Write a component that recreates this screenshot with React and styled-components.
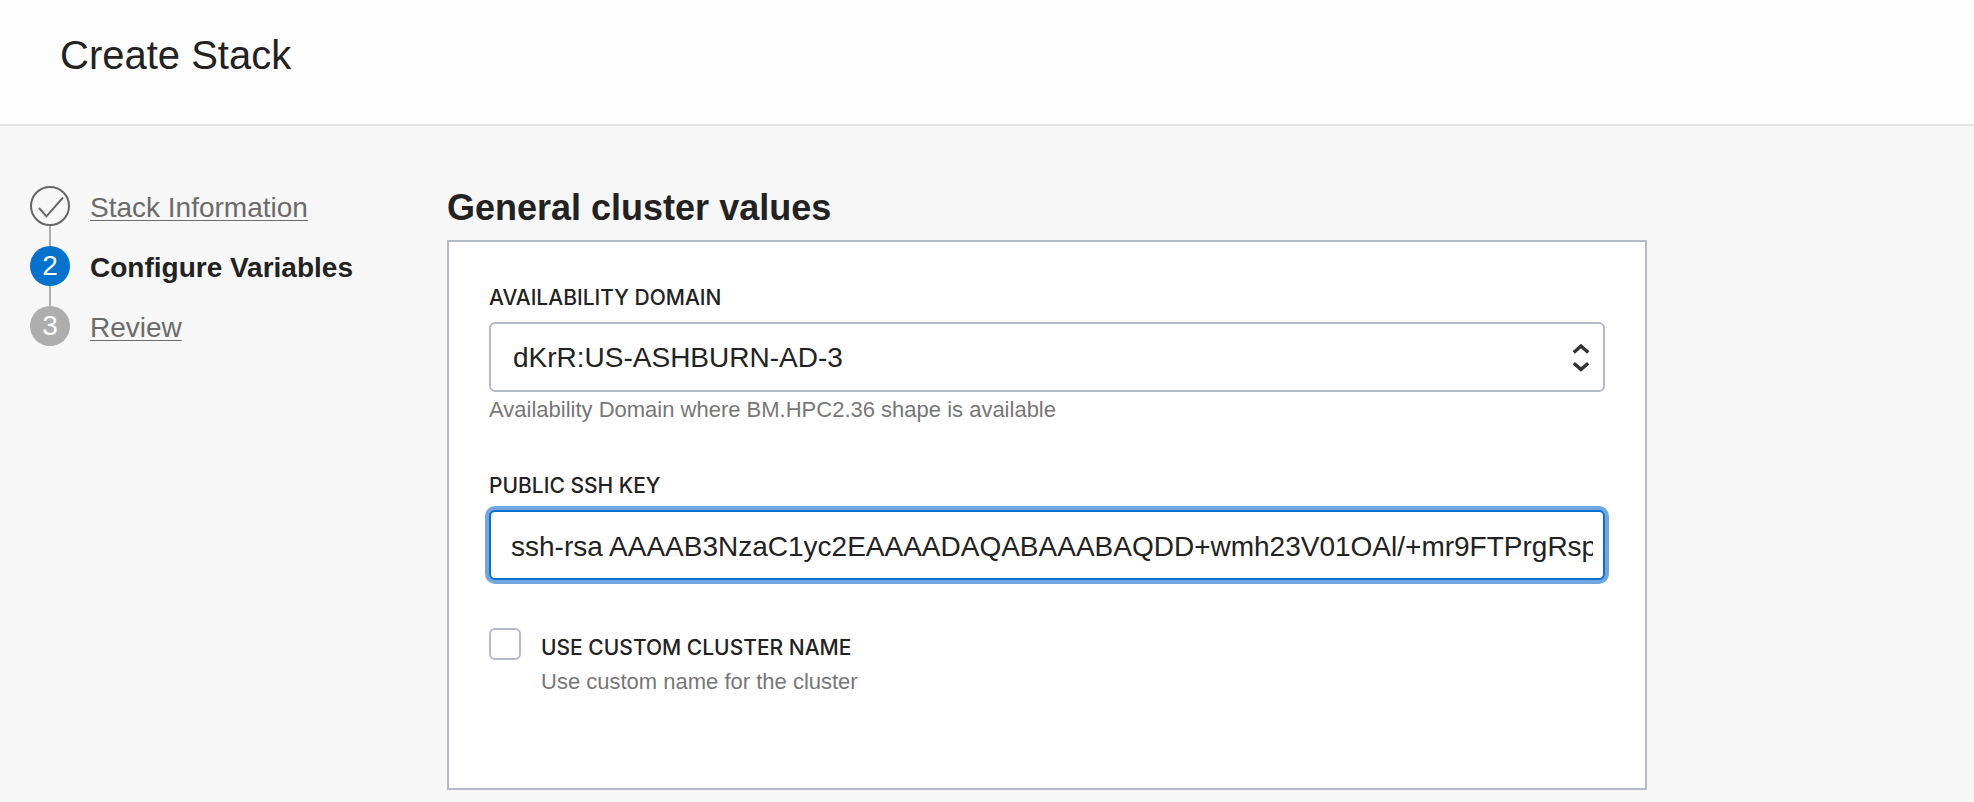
import React, { useEffect, useRef, useState } from "react";
import styled, { createGlobalStyle, css } from "styled-components";

const GlobalStyle = createGlobalStyle`
  *, *::before, *::after {
    box-sizing: border-box;
  }

  body {
    margin: 0;
    background: #f7f7f7;
    color: #222222;
    font-family: "Liberation Sans", Arial, sans-serif;
    font-size: 28px;
    line-height: 32px;
  }
`;

const Header = styled.header`
  padding: 31px 60px 45px;
  background: #fdfdfd;
  border-bottom: 2px solid #e4e4e4;
`;

const PageTitle = styled.h1`
  margin: 0;
  font-size: 40px;
  font-weight: 400;
  line-height: 48px;
`;

const Layout = styled.div`
  display: flex;
  align-items: flex-start;
  gap: 40px;
  padding: 60px 30px 12px;
`;

const StepList = styled.ol`
  display: flex;
  flex-direction: column;
  flex: 0 0 377px;
  margin: 0;
  padding: 0;
  list-style: none;
`;

const Step = styled.li`
  display: flex;
  align-items: flex-start;
  gap: 20px;
`;

const StepMarker = styled.div`
  display: flex;
  flex-direction: column;
  align-items: center;
`;

const StepBadge = styled.span`
  display: grid;
  place-items: center;
  width: 40px;
  height: 40px;
  border-radius: 50%;
  color: #ffffff;
  line-height: 40px;

  ${({ $state }) =>
    $state === "done"
      ? css`
          border: 2px solid #666666;
          color: #666666;
        `
      : css`
          background: ${$state === "current" ? "#0572ce" : "#aeaeae"};
        `}
`;

const StepConnector = styled.span`
  width: 2px;
  height: 20px;
  background: #aeaeae;
`;

const StepLink = styled.a`
  color: #6b6b6b;
  line-height: 44px;
  text-decoration: underline;
  text-decoration-thickness: 1px;
  text-decoration-skip-ink: none;
  text-underline-offset: 3px;
`;

const CurrentStep = styled.strong`
  color: #222222;
  font-weight: 700;
  line-height: 44px;
`;

const Section = styled.main`
  flex: 0 1 1200px;
  min-width: 0;
`;

const SectionTitle = styled.h2`
  margin: 0 0 10px;
  font-size: 36px;
  font-weight: 700;
  line-height: 44px;
`;

const Card = styled.form`
  display: flex;
  flex-direction: column;
  gap: 48px;
  padding: 42px 40px 92px;
  background: #ffffff;
  border: 2px solid #b5bac4;
`;

const Field = styled.div`
  display: flex;
  flex-direction: column;
`;

const Label = styled.label`
  font-family: "Inter", "Liberation Sans", sans-serif;
  font-size: 21px;
  font-weight: 500;
  line-height: 28px;
`;

const FieldLabel = styled(Label)`
  margin-bottom: 10px;
`;

const Hint = styled.p`
  margin: 4px 0 0;
  color: #777777;
  font-size: 22px;
  line-height: 28px;
`;

const controlStyles = css`
  width: 100%;
  height: 70px;
  background: #ffffff;
  border: 2px solid #b5bac4;
  border-radius: 6px;
  color: #222222;
  font: inherit;
  outline: none;

  &:focus {
    border-color: #0572ce;
    box-shadow: 0 0 0 4px #73a5e0;
  }
`;

const SelectBox = styled.div`
  position: relative;
`;

const Select = styled.select`
  ${controlStyles}
  display: block;
  padding: 2px 22px 0;
  appearance: none;
`;

const SelectArrows = styled.svg`
  position: absolute;
  top: 20px;
  right: 14px;
  pointer-events: none;
`;

const TextInput = styled.input`
  ${controlStyles}
  padding: 3px 10px 0 20px;
`;

const CheckField = styled.div`
  display: flex;
  align-items: flex-start;
  gap: 20px;
`;

const Checkbox = styled.input`
  flex: none;
  appearance: none;
  width: 32px;
  height: 32px;
  margin: 0;
  background: #ffffff;
  border: 2px solid #b5bac4;
  border-radius: 6px;

  &:checked {
    background: #0572ce;
    border-color: #0572ce;
  }
`;

const CheckText = styled.div`
  display: flex;
  flex-direction: column;
  gap: 2px;
  padding-top: 6px;
`;

const steps = [
  { name: "Stack Information", state: "done" },
  { name: "Configure Variables", state: "current" },
  { name: "Review", state: "pending" },
];

function CheckIcon() {
  return (
    <svg width="36" height="36" viewBox="0 0 36 36" fill="none" stroke="currentColor" strokeWidth="2" aria-hidden="true">
      <path d="M7 20 L14.5 28.3 L31 9.5" />
    </svg>
  );
}

function Steps() {
  return (
    <StepList>
      {steps.map((step, index) => (
        <Step key={step.name}>
          <StepMarker>
            <StepBadge $state={step.state}>
              {step.state === "done" ? <CheckIcon /> : index + 1}
            </StepBadge>
            {index < steps.length - 1 && <StepConnector />}
          </StepMarker>
          {step.state === "current" ? (
            <CurrentStep aria-current="step">{step.name}</CurrentStep>
          ) : (
            <StepLink href="#">{step.name}</StepLink>
          )}
        </Step>
      ))}
    </StepList>
  );
}

export default function App() {
  const keyInput = useRef(null);
  const [sshKey, setSshKey] = useState(
    "ssh-rsa AAAAB3NzaC1yc2EAAAADAQABAAABAQDD+wmh23V01OAl/+mr9FTPrgRsp"
  );

  // Focus with the caret at the start so the key type stays in view.
  useEffect(() => {
    keyInput.current.setSelectionRange(0, 0);
    keyInput.current.focus();
    keyInput.current.scrollLeft = 0;
  }, []);

  return (
    <>
      <GlobalStyle />
      <Header>
        <PageTitle>Create Stack</PageTitle>
      </Header>
      <Layout>
        <Steps />
        <Section>
          <SectionTitle>General cluster values</SectionTitle>
          <Card>
            <Field>
              <FieldLabel htmlFor="domain">AVAILABILITY DOMAIN</FieldLabel>
              <SelectBox>
                <Select id="domain" defaultValue="ad3">
                  <option value="ad3">dKrR:US-ASHBURN-AD-3</option>
                </Select>
                <SelectArrows width="20" height="30" viewBox="0 0 20 30" fill="none" stroke="#333333" strokeWidth="3.4" aria-hidden="true">
                  <path d="M2.8 10.4 L10 4 L17.2 10.4 M2.8 21.2 L10 27.4 L17.2 21.2" />
                </SelectArrows>
              </SelectBox>
              <Hint>Availability Domain where BM.HPC2.36 shape is available</Hint>
            </Field>
            <Field>
              <FieldLabel htmlFor="ssh-key">PUBLIC SSH KEY</FieldLabel>
              <TextInput
                ref={keyInput}
                id="ssh-key"
                type="text"
                spellCheck={false}
                value={sshKey}
                onChange={(event) => setSshKey(event.target.value)}
              />
            </Field>
            <CheckField>
              <Checkbox id="custom-name" type="checkbox" />
              <CheckText>
                <Label htmlFor="custom-name">USE CUSTOM CLUSTER NAME</Label>
                <Hint>Use custom name for the cluster</Hint>
              </CheckText>
            </CheckField>
          </Card>
        </Section>
      </Layout>
    </>
  );
}
